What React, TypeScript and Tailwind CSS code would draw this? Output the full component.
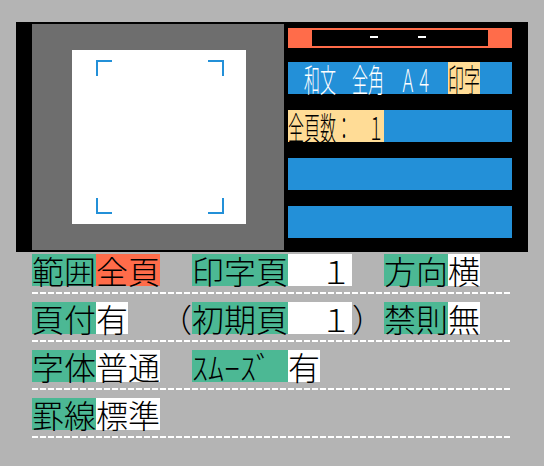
import React from "react";

function toFull(c: string) {
  const code = c.charCodeAt(0);
  if (code > 0x20 && code < 0x7f) return String.fromCharCode(code + 0xfee0);
  if (c === " ") return "\u3000";
  return c;
}

function Half({ text, className = "" }: { text: string; className?: string }) {
  return (
    <span className={`flex h-[32px] ${className}`}>
      {Array.from(text).map((c, i) => (
        <span key={i} className="flex h-[32px] w-[16px] justify-center">
          <span className="inline-block w-[32px] shrink-0 scale-x-50 text-center leading-[32px] whitespace-pre">
            {toFull(c)}
          </span>
        </span>
      ))}
    </span>
  );
}

function T({ children, className = "" }: { children: React.ReactNode; className?: string }) {
  return <span className={`block h-[32px] leading-[32px] ${className}`}>{children}</span>;
}

function Dash() {
  return (
    <div className="mt-[6px] mb-[8px] h-[2px] w-[478px] bg-[repeating-linear-gradient(90deg,#ffffff_0px,#ffffff_6px,transparent_6px,transparent_8px)]" />
  );
}

const F = "font-['Noto_Sans_CJK_JP',sans-serif]";

export default function App() {
  return (
    <div
      className={`h-[466px] w-[544px] overflow-hidden bg-[#b4b4b4] pt-[22px] text-[32px] font-light leading-[32px] text-black ${F}`}
    >
      {/* top block */}
      <div className="ml-[16px] flex h-[230px] w-[512px] bg-black">
        <div className="w-[16px]" />
        <div className="my-[2px] h-[226px] w-[252px] bg-[#6e6e6e] pt-[26px] pl-[40px]">
          <div className="relative h-[174px] w-[174px] bg-white">
            <svg className="absolute left-0 top-0" width="174" height="174" viewBox="0 0 174 174">
              <g fill="#2390d8">
                <rect x="24" y="10" width="16" height="2" />
                <rect x="24" y="10" width="2" height="16" />
                <rect x="136" y="10" width="16" height="2" />
                <rect x="150" y="10" width="2" height="16" />
                <rect x="24" y="162" width="16" height="2" />
                <rect x="24" y="148" width="2" height="16" />
                <rect x="136" y="162" width="16" height="2" />
                <rect x="150" y="148" width="2" height="16" />
              </g>
            </svg>
          </div>
        </div>
        <div className="w-[244px] pt-[6px] pl-[4px]">
          <div className="h-[20px] w-[224px] bg-[#ff6c4a] pt-[2px] pl-[24px]">
            <div className="relative h-[16px] w-[176px] bg-black">
              <div className="absolute left-[58px] top-[6px] h-[2px] w-[8px] bg-white" />
              <div className="absolute left-[106px] top-[6px] h-[2px] w-[8px] bg-white" />
            </div>
          </div>
          <div className="mt-[14px] flex flex-col gap-[16px]">
            <div className="flex h-[32px] w-[224px] bg-[#2390d8] text-white">
              <Half text=" 和文 全角 A4 " />
              <Half text="印字" className="bg-[#ffdc96] text-black" />
            </div>
            <div className="flex h-[32px] w-[224px] bg-[#2390d8]">
              <Half text="全頁数: 1" className="bg-[#ffdc96] text-black" />
            </div>
            <div className="h-[32px] w-[224px] bg-[#2390d8]" />
            <div className="h-[32px] w-[224px] bg-[#2390d8]" />
          </div>
        </div>
      </div>

      {/* settings rows */}
      <div className="ml-[32px] mt-[2px] flex flex-col">
        <div className="flex h-[32px]">
          <T className="bg-[#4cb894]">範囲</T>
          <T className="bg-[#ff6c4a]">全頁</T>
          <T className="ml-[32px] bg-[#4cb894]">印字頁</T>
          <T className="w-[64px] bg-white text-right">１</T>
          <T className="ml-[32px] bg-[#4cb894]">方向</T>
          <T className="bg-white">横</T>
        </div>
        <Dash />
        <div className="flex h-[32px]">
          <T className="bg-[#4cb894]">頁付</T>
          <T className="bg-white">有</T>
          <T className="ml-[32px] w-[32px]">（</T>
          <T className="bg-[#4cb894]">初期頁</T>
          <T className="w-[64px] bg-white text-right">１</T>
          <T className="w-[32px]">）</T>
          <T className="bg-[#4cb894]">禁則</T>
          <T className="bg-white">無</T>
        </div>
        <Dash />
        <div className="flex h-[32px]">
          <T className="bg-[#4cb894]">字体</T>
          <T className="bg-white">普通</T>
          <T className="ml-[32px] w-[96px] bg-[#4cb894]">ｽﾑｰｽﾞ</T>
          <T className="bg-white">有</T>
        </div>
        <Dash />
        <div className="flex h-[32px]">
          <T className="bg-[#4cb894]">罫線</T>
          <T className="bg-white">標準</T>
        </div>
        <Dash />
      </div>
    </div>
  );
}
